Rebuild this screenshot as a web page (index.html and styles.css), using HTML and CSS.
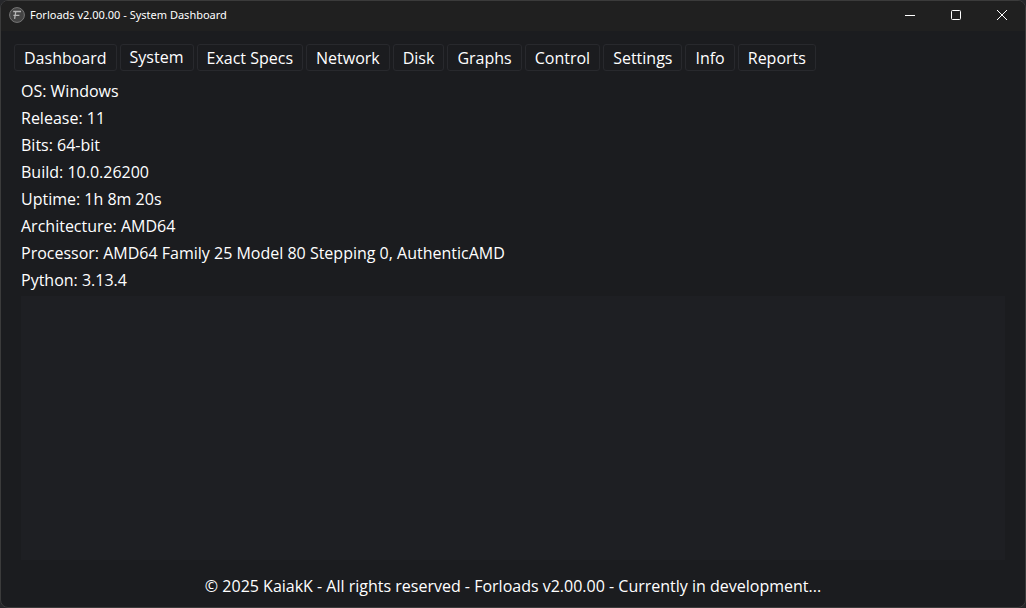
FILE: index.html
```html
<!DOCTYPE html>
<html lang="en">
<head>
  <meta charset="UTF-8" />
  <meta name="viewport" content="width=device-width, initial-scale=1.0"/>
  <title>Forloads v2.00.00 - System Dashboard</title>
  <link rel="stylesheet" href="styles.css">
</head>
<body>
  <div class="window">
    <header class="titlebar">
      <svg class="app-icon" viewBox="0 0 16 16" aria-hidden="true">
        <circle cx="8" cy="8" r="7.4" fill="#444" stroke="#777" stroke-width="1"/>
        <path d="M4.200 4.500h7.800M6.800 4.500L5.600 11.800M4.400 8.300h6" fill="none" stroke="#b4b4b4" stroke-width="1.300"/>
      </svg>
      <h1>Forloads v2.00.00 - System Dashboard</h1>
      <div class="window-controls">
        <button type="button" aria-label="Minimize">
          <svg viewBox="0 0 12 12"><path d="M1 6.500h10"/></svg>
        </button>
        <button type="button" aria-label="Maximize">
          <svg viewBox="0 0 12 12"><rect x="1.500" y="1.500" width="9" height="9" rx="1"/></svg>
        </button>
        <button type="button" aria-label="Close">
          <svg viewBox="0 0 12 12"><path d="M1 1l10 10M11 1L1 11"/></svg>
        </button>
      </div>
    </header>

    <nav class="tabs">
      <button type="button">Dashboard</button>
      <button type="button" class="active">System</button>
      <button type="button">Exact Specs</button>
      <button type="button">Network</button>
      <button type="button">Disk</button>
      <button type="button">Graphs</button>
      <button type="button">Control</button>
      <button type="button">Settings</button>
      <button type="button">Info</button>
      <button type="button">Reports</button>
    </nav>

    <main class="content">
      <ul class="system-info">
        <li>OS: Windows</li>
        <li>Release: 11</li>
        <li>Bits: 64-bit</li>
        <li>Build: 10.0.26200</li>
        <li>Uptime: 1h 8m 20s</li>
        <li>Architecture: AMD64</li>
        <li>Processor: AMD64 Family 25 Model 80 Stepping 0, AuthenticAMD</li>
        <li>Python: 3.13.4</li>
      </ul>
      <div class="panel"></div>
    </main>

    <footer>&copy; 2025 KaiakK - All rights reserved - Forloads v2.00.00 - Currently in development...</footer>
  </div>
</body>
</html>
```
FILE: styles.css
```css
* {
  box-sizing: border-box;
}
body {
  margin: 0;
  background: #26272a;
  color: #fff;
  font-family: "Open Sans", "Noto Sans", sans-serif;
  font-size: 16px;
  font-weight: 500;
}
button {
  background: none;
  border: none;
  color: inherit;
  font: inherit;
}
.window {
  display: flex;
  flex-direction: column;
  min-height: 100vh;
  background: #1b1c1f;
  border: 1px solid #3b3b3b;
  border-radius: 8px;
  overflow: hidden;
}
.titlebar {
  display: flex;
  align-items: center;
  height: 30px;
  padding-left: 8px;
  background: #202020;
}
.titlebar h1 {
  flex: 1;
  margin: 0;
  font-family: "Noto Sans", sans-serif;
  font-size: 11px;
  font-weight: 400;
  line-height: 16px;
  padding-bottom: 2px;
}
.app-icon {
  width: 16px;
  height: 16px;
  margin: 0 5px 2px 0;
}
.window-controls {
  display: flex;
}
.window-controls button {
  display: flex;
  align-items: center;
  justify-content: center;
  width: 46px;
  height: 30px;
  padding: 0 0 2px;
}
.window-controls svg {
  width: 12px;
  height: 12px;
  fill: none;
  stroke: #fff;
}
.tabs {
  display: flex;
  gap: 3px;
  padding: 13px 13px 0;
}
.tabs button {
  height: 27px;
  padding: 2px 9px 0;
  border: 1px solid #28292d;
  border-radius: 3px;
  line-height: 23px;
  white-space: nowrap;
}
.tabs .active {
  padding: 1px 9px;
}
.content {
  flex: 1;
  display: flex;
  flex-direction: column;
  padding: 7px 20px 0;
}
.system-info {
  margin: 0 0 2px;
  padding: 0;
  list-style: none;
  line-height: 27px;
}
.panel {
  flex: 1;
  background: #1e1f23;
}
footer {
  padding: 13px 20px 7px;
  line-height: 27px;
  text-align: center;
}
```
